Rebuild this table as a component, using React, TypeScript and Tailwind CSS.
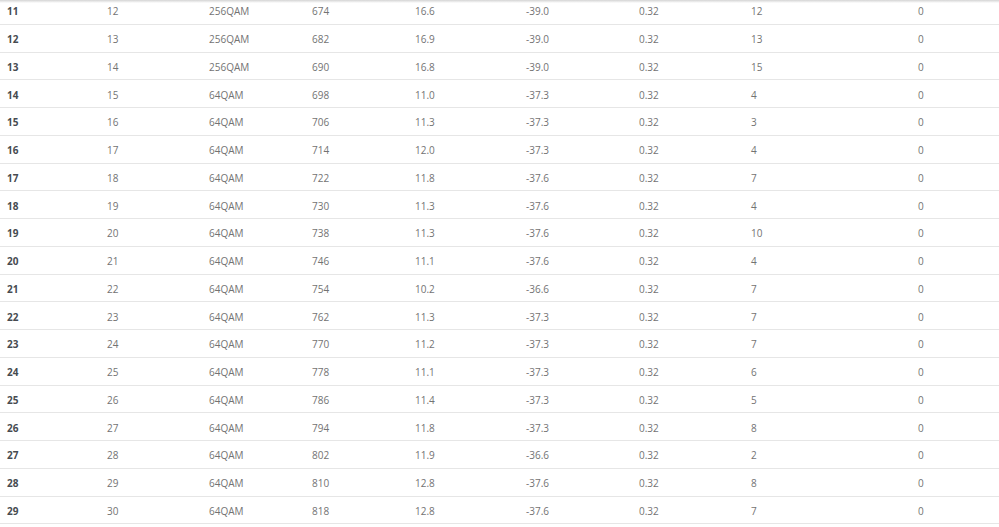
import React from 'react';

const rows: [number, number, string, number, string, string, string, number, number][] = [
  [11, 12, '256QAM', 674, '16.6', '-39.0', '0.32', 12, 0],
  [12, 13, '256QAM', 682, '16.9', '-39.0', '0.32', 13, 0],
  [13, 14, '256QAM', 690, '16.8', '-39.0', '0.32', 15, 0],
  [14, 15, '64QAM', 698, '11.0', '-37.3', '0.32', 4, 0],
  [15, 16, '64QAM', 706, '11.3', '-37.3', '0.32', 3, 0],
  [16, 17, '64QAM', 714, '12.0', '-37.3', '0.32', 4, 0],
  [17, 18, '64QAM', 722, '11.8', '-37.6', '0.32', 7, 0],
  [18, 19, '64QAM', 730, '11.3', '-37.6', '0.32', 4, 0],
  [19, 20, '64QAM', 738, '11.3', '-37.6', '0.32', 10, 0],
  [20, 21, '64QAM', 746, '11.1', '-37.6', '0.32', 4, 0],
  [21, 22, '64QAM', 754, '10.2', '-36.6', '0.32', 7, 0],
  [22, 23, '64QAM', 762, '11.3', '-37.3', '0.32', 7, 0],
  [23, 24, '64QAM', 770, '11.2', '-37.3', '0.32', 7, 0],
  [24, 25, '64QAM', 778, '11.1', '-37.3', '0.32', 6, 0],
  [25, 26, '64QAM', 786, '11.4', '-37.3', '0.32', 5, 0],
  [26, 27, '64QAM', 794, '11.8', '-37.3', '0.32', 8, 0],
  [27, 28, '64QAM', 802, '11.9', '-36.6', '0.32', 2, 0],
  [28, 29, '64QAM', 810, '12.8', '-37.6', '0.32', 8, 0],
  [29, 30, '64QAM', 818, '12.8', '-37.6', '0.32', 7, 0],
];

const App = () => {
  return (
    <div className="relative w-[999px] h-[527px] overflow-hidden bg-white font-['Open_Sans',sans-serif] text-[10px]">
      <div className="-mt-[3px]">
        {rows.map((r) => (
          <div
            key={r[0]}
            className="grid grid-cols-[100px_102px_103px_103px_111px_113px_112px_167px_88px] h-[27.75px] pt-[3px] items-center border-b border-[#e6e6e6] text-[#737373]"
          >
            <div className="pl-[7px] font-bold text-[#474b50]">{r[0]}</div>
            <div className="pl-[7px]">{r[1]}</div>
            <div className="pl-[7px]">{r[2]}</div>
            <div className="pl-[7px]">{r[3]}</div>
            <div className="pl-[7px]">{r[4]}</div>
            <div className="pl-[7px]">{r[5]}</div>
            <div className="pl-[7px]">{r[6]}</div>
            <div className="pl-[7px]">{r[7]}</div>
            <div className="pl-[7px]">{r[8]}</div>
          </div>
        ))}
      </div>
      {/* sticky header shadow */}
      <div className="absolute top-0 left-0 right-0 h-[3px] bg-gradient-to-b from-[#d4d4d4] to-transparent" />
    </div>
  );
};

export default App;
